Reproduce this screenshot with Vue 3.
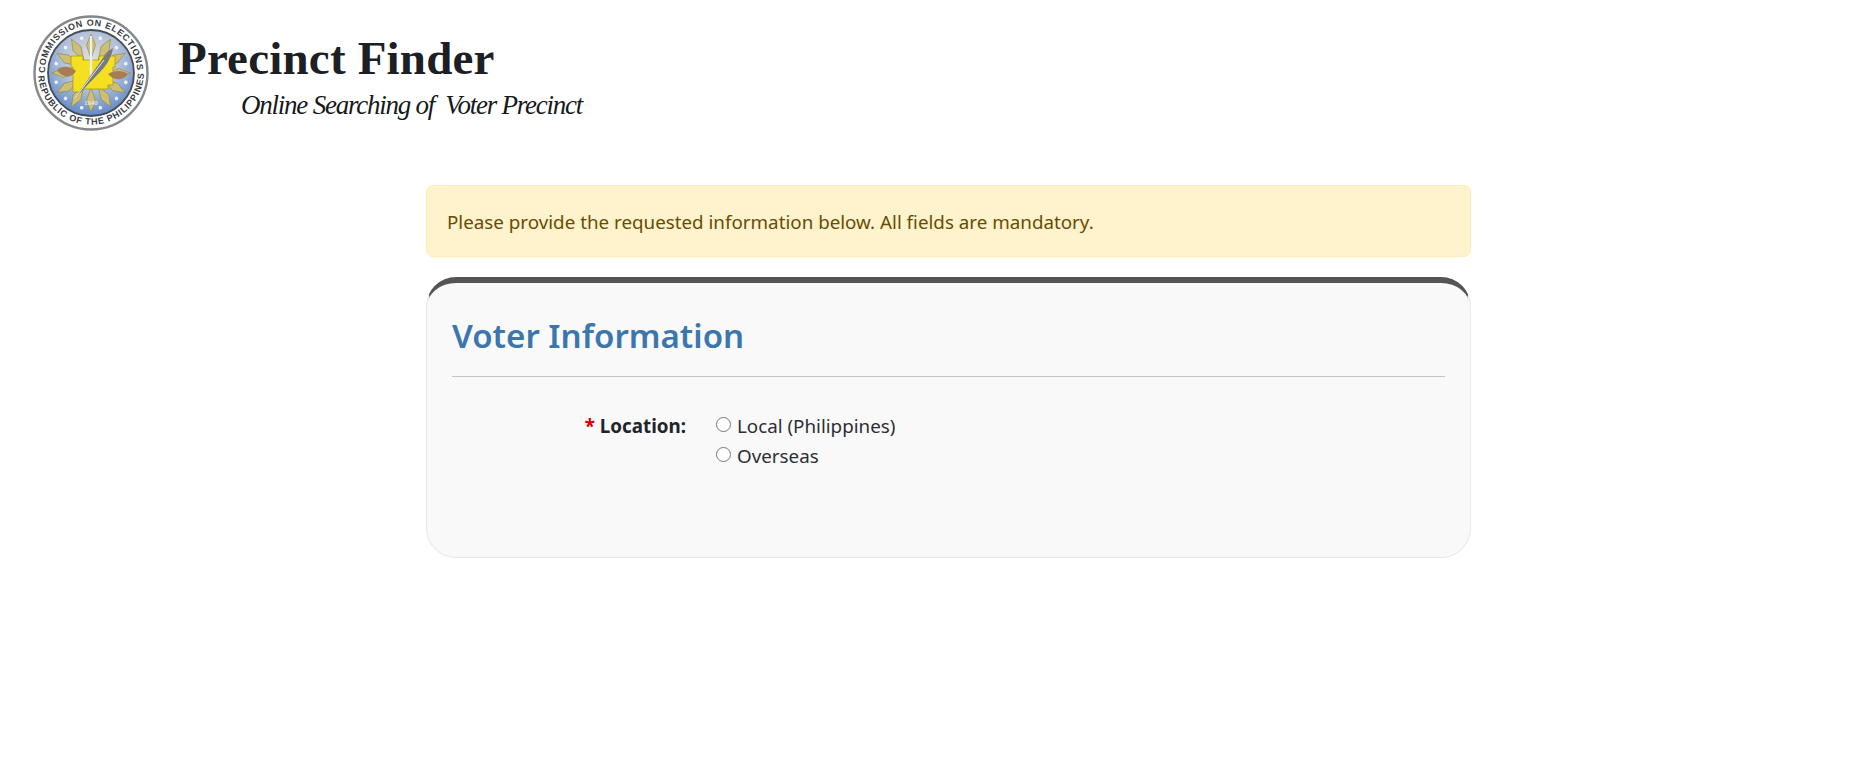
<script setup>
const rays = [0, 30, 60, 90, 120, 150, 180, 210, 240, 270, 300, 330]
const dots = [15, 45, 75, 105, 135, 165, 195, 225, 255, 285, 315, 345]
</script>

<template>
  <div class="page">
    <header class="head">
      <svg class="logo" viewBox="0 0 116 116" width="116" height="116" aria-label="Commission on Elections seal">
        <defs>
          <radialGradient id="blue" cx="50%" cy="35%" r="70%">
            <stop offset="0" stop-color="#dfe1df" />
            <stop offset="0.5" stop-color="#afbfd8" />
            <stop offset="1" stop-color="#5480c6" />
          </radialGradient>
          <path id="arcTop" d="M 12.3 62 A 46 46 0 1 1 103.7 62" />
          <path id="arcBottom" d="M 5.2 52 A 53 53 0 1 0 110.8 52" />
        </defs>
        <circle cx="58" cy="58" r="56.5" fill="#fff" stroke="#85878a" stroke-width="2.4" />
        <circle cx="58" cy="58" r="43" fill="url(#blue)" stroke="#474b53" stroke-width="1.8" />
        <text class="ring"><textPath href="#arcTop" startOffset="4" textLength="144">COMMISSION ON ELECTIONS</textPath></text>
        <text class="ring"><textPath href="#arcBottom" startOffset="9" textLength="160">REPUBLIC OF THE PHILIPPINES</textPath></text>
        <g fill="#cdbf76" stroke="#8d8648" stroke-width="0.6">
          <path v-for="r in rays" :key="r" d="M58 19 L62.5 30 L58 44 L53.5 30 Z" :transform="`rotate(${r} 58 58)`" />
        </g>
        <g fill="#eef3fb">
          <circle v-for="d in dots" :key="d" cx="58" cy="22" r="1.8" :transform="`rotate(${d} 58 58)`" />
        </g>
        <path d="M38 41 H50 V45 H66 V41 H82 V52 H80 V70 H75 V74 H48 V77 H40 V52 H38 Z" fill="#f4e020" stroke="#a68f18" stroke-width="0.7" />
        <path d="M24 55 C29 50 38 51 43 56 C38 64 29 63 24 55 Z M75 59 C81 55 90 55 95 59 C90 66 81 66 75 59 Z" fill="#a67d54" />
        <path d="M58 21 V62" stroke="#eef0ee" stroke-width="2.2" />
        <path d="M42 83 L72 40 C75 36 78 34 80 33 C79 41 74 50 68 56 Z" fill="#767a80" />
        <path d="M42 83 L71 45" stroke="#e9ebeb" stroke-width="1" />
        <text class="year" x="58" y="90">1940</text>
      </svg>
      <div class="brand">
        <h1 class="title">Precinct Finder</h1>
        <p class="sub">Online Searching of&nbsp; Voter Precinct</p>
      </div>
    </header>

    <main class="content">
      <div class="notice">Please provide the requested information below. All fields are mandatory.</div>
      <section class="card">
        <h2 class="card-title">Voter Information</h2>
        <hr class="rule" />
        <div class="field">
          <div class="label"><span class="req">*</span> Location:</div>
          <div class="options">
            <label class="opt"><input type="radio" name="loc" /> <span>Local (Philippines)</span></label>
            <label class="opt"><input type="radio" name="loc" /> <span>Overseas</span></label>
          </div>
        </div>
      </section>
    </main>
  </div>
</template>

<style scoped>
.page {
  font-family: "Noto Sans", "Open Sans", sans-serif;
  color: #212529;
  background: #fff;
  min-height: 782px;
  box-sizing: border-box;
}
.head {
  display: flex;
  align-items: flex-start;
  padding: 15px 0 0 33px;
  height: 170px;
  box-sizing: border-box;
}
.logo { flex: none; display: block; }
.ring {
  font-family: "Liberation Sans", sans-serif;
  font-size: 9px;
  font-weight: 700;
  fill: #3a3d45;
}
.year {
  font-family: "Liberation Sans", sans-serif;
  font-size: 6px;
  font-weight: 700;
  fill: #dfe5ea;
  text-anchor: middle;
}
.brand { margin-left: 29px; padding-top: 18px; }
.title {
  margin: 0;
  font-family: "Liberation Serif", serif;
  font-weight: 700;
  font-size: 47px;
  line-height: 50px;
  letter-spacing: 0.2px;
  color: #1c2024;
}
.sub {
  margin: 4px 0 0 63px;
  font-family: "Liberation Serif", serif;
  font-style: italic;
  font-size: 27px;
  line-height: 36px;
  letter-spacing: -1.23px;
  color: #16191c;
  white-space: nowrap;
}
.content {
  width: 1045px;
  margin-left: 426px;
  margin-top: 15px;
}
.notice {
  box-sizing: border-box;
  height: 72px;
  padding: 2px 20px 0;
  display: flex;
  align-items: center;
  font-size: 18.8px;
  color: #664d03;
  background: #fff3cd;
  border: 1px solid #ffecb5;
  border-radius: 7px;
}
.card {
  box-sizing: border-box;
  height: 281px;
  margin-top: 20px;
  padding: 29px 25px 0;
  background: #f9f9f9;
  border: 1px solid #e8e8e8;
  border-top: 6px solid #555;
  border-radius: 30px;
}
.card-title {
  margin: 0;
  font-size: 33.1px;
  line-height: 48px;
  font-weight: 600;
  color: #3b77ad;
}
.rule {
  margin: 16px 0 0;
  border: 0;
  border-top: 1px solid #c4c4c4;
}
.field {
  display: flex;
  margin-top: 34px;
  font-size: 18.8px;
  line-height: 30px;
}
.label {
  width: 234px;
  text-align: right;
  font-weight: 700;
  color: #212529;
  flex: none;
}
.req { color: #d00000; }
.options { margin-left: 30px; color: #2b2f33; }
.opt { display: flex; align-items: center; gap: 6px; }
.opt input {
  width: 15px;
  height: 15px;
  margin: 0;
  accent-color: #555;
  position: relative;
  top: -2px;
}
</style>
